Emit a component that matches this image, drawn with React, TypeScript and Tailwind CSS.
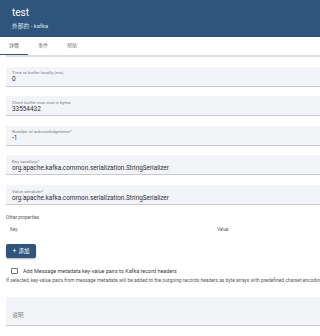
import React from "react";

const font = { fontFamily: "Roboto, 'Noto Sans CJK SC', sans-serif" };

function Field({ label, value }: { label: string; value: string }) {
  return (
    <div className="h-[20px] bg-[#f3f4f8] border-b border-[#c9cacd] pl-[6px] flex flex-col">
      <div className="text-[4.4px] leading-[5px] text-[#7a7d82] mt-[3.5px] whitespace-nowrap">{label}</div>
      <div className="text-[6.4px] leading-[7px] text-[#2d2f33] mt-[1px] whitespace-nowrap">{value}</div>
    </div>
  );
}

export default function App() {
  return (
    <div className="w-[320px] h-[336px] overflow-hidden bg-white relative" style={font}>
      <div className="h-[37px] bg-[#30557d] px-[12px] flex flex-col">
        <div className="text-white text-[10px] leading-[10px] mt-[8px]">test</div>
        <div className="text-[#dbe3ec] text-[5.8px] leading-[6px] mt-[4.5px]">外部的 - kafka</div>
      </div>
      <div className="h-[18px] flex items-stretch text-[5px] text-[#7a7d82]">
        <div className="relative w-[28px] flex items-center justify-center text-[#4a4d52]">
          详情
          <div className="absolute left-0 right-0 bottom-[0px] h-[1.5px] bg-[#30557d]" />
        </div>
        <div className="w-[30px] flex items-center justify-center">事件</div>
        <div className="w-[28px] flex items-center justify-center">帮助</div>
      </div>
      <div className="ml-[6px] h-[2px] bg-[#dedfe2]" />
      <div className="w-[620px] px-[6px] flex flex-col">
        <div className="flex flex-col gap-[9.6px] mt-[9.7px]">
          <Field label="Time to buffer locally (ms)" value="0" />
          <Field label="Client buffer max size in bytes" value="33554432" />
          <Field label="Number of acknowledgments*" value="-1" />
          <Field label="Key serializer*" value="org.apache.kafka.common.serialization.StringSerializer" />
          <Field label="Value serializer*" value="org.apache.kafka.common.serialization.StringSerializer" />
        </div>
        <div className="text-[4.6px] leading-[5px] text-[#55585d] mt-[10px]">Other properties</div>
        <div className="flex text-[4.6px] leading-[5px] text-[#55585d] mt-[6.5px]">
          <div className="w-[211px] pl-[4px]">Key</div>
          <div>Value</div>
        </div>
        <div className="mt-[12.5px]">
          <div className="w-[30px] h-[14px] rounded-[2px] bg-[#30557d] text-white text-[5.5px] flex items-center justify-center gap-[2px] shadow-[0_1px_1.5px_rgba(0,0,0,0.3)]">
            <span className="text-[7px] leading-[7px]">+</span>
            <span>添加</span>
          </div>
        </div>
        <div className="flex items-center mt-[9.5px] pl-[5px]">
          <div className="w-[6.5px] h-[6.5px] border-[0.8px] border-[#6b6e73] rounded-[1px]" />
          <div className="text-[5.45px] leading-[6px] text-[#3a3c40] ml-[5.5px] whitespace-nowrap">
            Add Message metadata key-value pairs to Kafka record headers
          </div>
        </div>
        <div className="text-[4.9px] leading-[5px] text-[#55585d] mt-[3.5px] whitespace-nowrap">
          If selected, key-value pairs from message metadata will be added to the outgoing records headers as byte arrays with predefined charset encoding
        </div>
        <div className="h-[29px] bg-[#f3f4f8] border-b border-[#c9cacd] mt-[14px] pl-[6.5px] flex flex-col">
          <div className="text-[5.5px] leading-[6px] text-[#7a7d82] mt-[15.5px]">说明</div>
        </div>
      </div>
    </div>
  );
}
